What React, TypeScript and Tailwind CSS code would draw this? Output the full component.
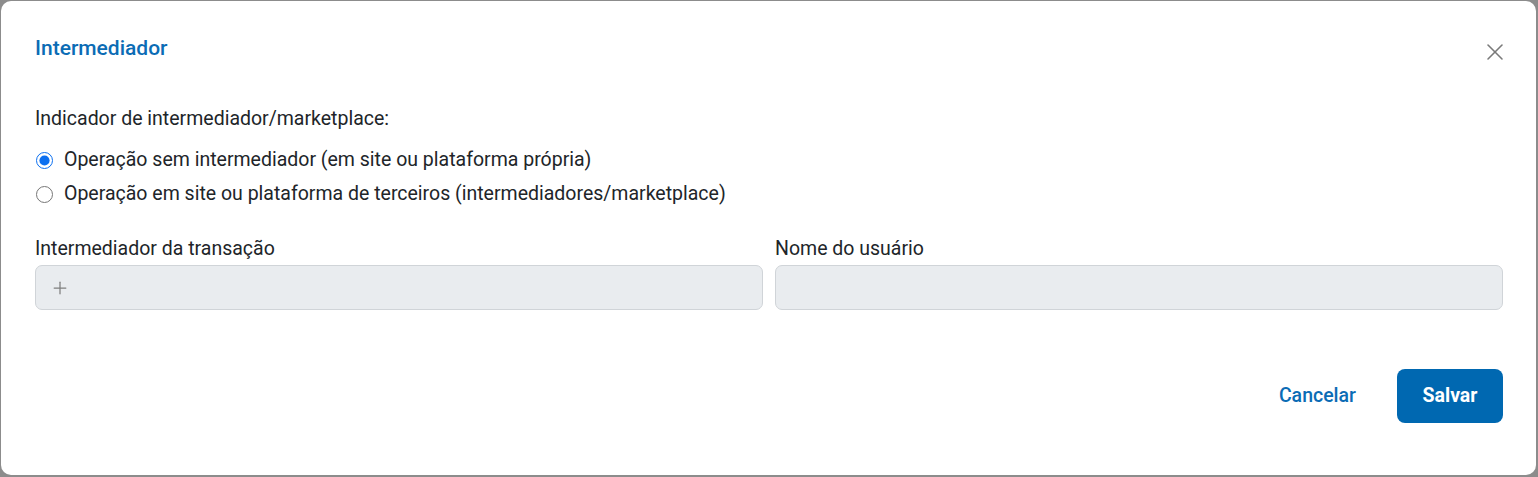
import { X, Plus } from "lucide-react";

export default function App() {
	return (
		<div className="h-[477px] w-[1538px] bg-[#8c8c8c] pb-[2px] pl-px pr-[2px] pt-px font-['Roboto',sans-serif]">
			<div className="flex h-full flex-col rounded-[10px] bg-white pl-[34px] pr-[33px]">
				<div className="mt-[33px] flex items-start justify-between">
					<h2 className="text-[21px] font-medium leading-[28px] text-[#0b6cb5]">Intermediador</h2>
					<button className="mr-[-6px] mt-[4px] text-[#7a7a7a]">
						<X size={28} strokeWidth={1.3} />
					</button>
				</div>

				<p className="mt-[40px] text-[19.5px] leading-[26px] text-[#212529]">
					Indicador de intermediador/marketplace:
				</p>

				<div className="mt-[11px] flex flex-col text-[19.5px] text-[#212529]">
					<label className="flex h-[34px] items-center gap-[11px]">
						<input type="radio" name="ind" defaultChecked className="ml-[1px] h-[17px] w-[17px] accent-[#0b6ff0]" />
						Operação sem intermediador (em site ou plataforma própria)
					</label>
					<label className="flex h-[34px] items-center gap-[11px]">
						<input type="radio" name="ind" className="ml-[1px] h-[17px] w-[17px] accent-[#0b6ff0]" />
						Operação em site ou plataforma de terceiros (intermediadores/marketplace)
					</label>
				</div>

				<div className="mt-[25px] grid grid-cols-2 gap-x-[12px]">
					<div className="flex flex-col gap-[3px]">
						<span className="text-[19.5px] leading-[26px] text-[#212529]">Intermediador da transação</span>
						<div className="flex h-[45px] items-center rounded-[7px] border border-[#d0d4d8] bg-[#e9ecef] px-[14px] text-[#7f7f7f]">
							<Plus size={20} strokeWidth={1.5} />
						</div>
					</div>
					<div className="flex flex-col gap-[3px]">
						<span className="text-[19.5px] leading-[26px] text-[#212529]">Nome do usuário</span>
						<div className="h-[45px] rounded-[7px] border border-[#d0d4d8] bg-[#e9ecef]" />
					</div>
				</div>

				<div className="mt-[59px] flex items-center justify-end gap-[17px]">
					<button className="px-[24px] text-[19.5px] font-medium text-[#0b6cb5]">Cancelar</button>
					<button className="h-[54px] w-[106px] rounded-[8px] bg-[#0068b1] text-[19.5px] font-bold text-white">
						Salvar
					</button>
				</div>
			</div>
		</div>
	);
}
